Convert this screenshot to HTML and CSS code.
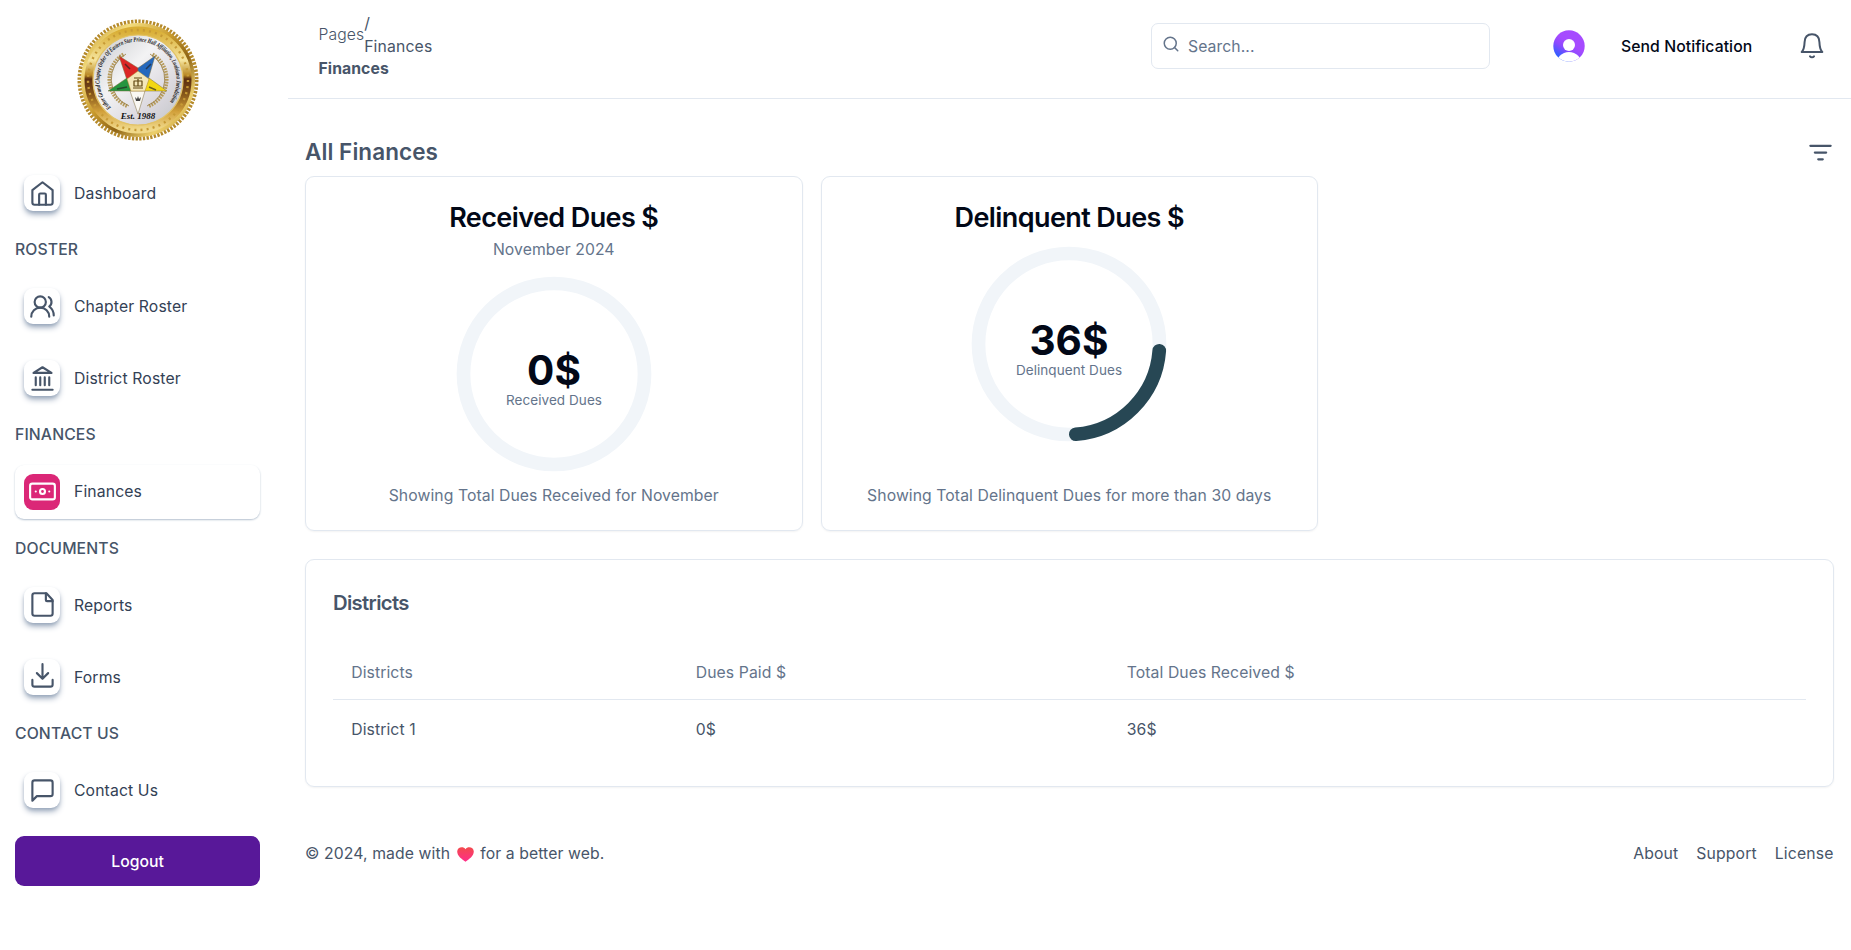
FILE: index.html
```html
<!DOCTYPE html>
<html lang="en">
<head>
<meta charset="utf-8">
<title>Finances</title>
<link rel="stylesheet" href="styles.css">
</head>
<body>
<div class="app">
  <aside class="sidebar">
    <svg class="logo" viewBox="0 0 122 122">
      <defs>
        <linearGradient id="gold" x1="0" y1="0" x2="1" y2="1">
          <stop offset="0" stop-color="#b98716"/><stop offset=".22" stop-color="#f3dc7e"/><stop offset=".45" stop-color="#c89a2c"/><stop offset=".62" stop-color="#8f6414"/><stop offset=".8" stop-color="#edd06c"/><stop offset="1" stop-color="#a87512"/>
        </linearGradient>
        <linearGradient id="band" x1="0" y1="0" x2="0" y2="1">
          <stop offset="0" stop-color="#d9ae35"/><stop offset=".3" stop-color="#f5e49d"/><stop offset=".45" stop-color="#b98825"/><stop offset=".49" stop-color="#5b2d10"/><stop offset=".65" stop-color="#87581a"/><stop offset=".82" stop-color="#d2a03a"/><stop offset="1" stop-color="#f0d98a"/>
        </linearGradient>
        <linearGradient id="pearl" x1="0" y1="0" x2="1" y2="1">
          <stop offset="0" stop-color="#c6c8cc"/><stop offset=".4" stop-color="#f3f3f4"/><stop offset=".7" stop-color="#dcd9df"/><stop offset="1" stop-color="#bfc2c6"/>
        </linearGradient>
        <path id="motto" d="M34 88.500A38.500 38.500 0 1 1 88 88.500"/>
      </defs>
      <circle cx="61" cy="61" r="58.500" fill="none" stroke="#b58a2b" stroke-width="4" stroke-dasharray="2.300 1.375"/>
      <circle cx="61" cy="61" r="57" fill="url(#gold)"/>
      <circle cx="61" cy="61" r="49" fill="none" stroke="url(#band)" stroke-width="9"/>
      <circle cx="61" cy="61" r="50" fill="none" stroke="#c79a35" stroke-width="2.400" stroke-dasharray="2 4.158"/>
      <circle cx="61" cy="61" r="45" fill="url(#pearl)" stroke="#e2c265" stroke-width="1.200"/>
      <g fill="none" stroke="#b59a5a" stroke-width="3.600" stroke-dasharray="1.700 1">
        <path d="M50 87A29 29 0 0 1 47 35"/><path d="M72 87A29 29 0 0 0 75 35"/>
      </g>
      <path d="M52 87A29 29 0 0 1 49 35M70 87A29 29 0 0 0 73 35" fill="none" stroke="#94783c" stroke-width=".8"/>
      <g stroke="#7c6a3a" stroke-width=".5">
        <path d="M42 37L61 49 61 53 50 61Z" fill="#dc2626"/>
        <path d="M78 37L61 49 61 53 71 61Z" fill="#2468bd"/>
        <path d="M31 72L50 59 54 72Z" fill="#26953f"/>
        <path d="M90 72L72 59 67 72Z" fill="#f2d713"/>
        <path d="M61 95L53 72 68 72Z" fill="#faf8f3"/>
        <path d="M61 52L72 60 68 72 54 72 50 60Z" fill="#f4e7b9" stroke="#b28a2f"/>
      </g>
      <path d="M57 59h8M57 62h8v5h-8zM56 69h10M61 60v7" fill="none" stroke="#5f4712" stroke-width="1.200"/>
      <path d="M58 78l1 4h4l1-4-2 2-1-3-1 3z" fill="#444"/>
      <path d="M48 45l5 5M69 50l5-5M40 70l10-2M72 68l7 3" stroke="#222" stroke-width="1.500" opacity=".65"/>
      <text class="logo-text"><textPath href="#motto" textLength="174" lengthAdjust="spacingAndGlyphs">Esther Grand Chapter Order Of Eastern Star Prince Hall Affiliation, Louisiana Jurisdiction</textPath></text>
      <text class="logo-year" x="61" y="100" text-anchor="middle">Est. 1988</text>
    </svg>

    <nav class="nav">
      <a class="item"><span class="tile"><svg viewBox="0 0 24 24"><path d="M3 9l9-7 9 7v11a2 2 0 0 1-2 2H5a2 2 0 0 1-2-2z"/><path d="M9 22V13a1 1 0 0 1 1-1h4a1 1 0 0 1 1 1v9"/></svg></span>Dashboard</a>
      <h6>ROSTER</h6>
      <a class="item"><span class="tile"><svg viewBox="0 0 24 24"><path d="M18 21a8 8 0 0 0-16 0"/><circle cx="10" cy="8" r="5"/><path d="M22 20c0-3.370-2-6.500-4-8a5 5 0 0 0-.45-8.300"/></svg></span>Chapter Roster</a>
      <a class="item gap"><span class="tile"><svg viewBox="0 0 24 24"><path d="M3 22h18M6 18v-7M10 18v-7M14 18v-7M18 18v-7M12 2l8 5H4z"/></svg></span>District Roster</a>
      <h6>FINANCES</h6>
      <a class="item active"><span class="tile"><svg viewBox="0 0 24 24"><rect x="1" y="5" width="22" height="14" rx="2"/><circle cx="12" cy="12" r="2.200"/><path d="M6 12h.01M18 12h.01"/></svg></span>Finances</a>
      <h6>DOCUMENTS</h6>
      <a class="item"><span class="tile"><svg viewBox="0 0 24 24"><path d="M15.500 2H5a2 2 0 0 0-2 2v16a2 2 0 0 0 2 2h14a2 2 0 0 0 2-2V8z"/><path d="M15 2v6a1 1 0 0 0 1 1h5"/></svg></span>Reports</a>
      <a class="item gap"><span class="tile"><svg viewBox="0 0 24 24"><path d="M21 15v4a2 2 0 0 1-2 2H5a2 2 0 0 1-2-2v-4M7 9l5 5 5-5M12 14V1"/></svg></span>Forms</a>
      <h6>CONTACT US</h6>
      <a class="item"><span class="tile"><svg viewBox="0 0 24 24"><path d="M21 15a2 2 0 0 1-2 2H7l-4 4V5a2 2 0 0 1 2-2h14a2 2 0 0 1 2 2z"/></svg></span>Contact Us</a>
    </nav>
    <button class="logout">Logout</button>
  </aside>

  <div class="page">
    <header class="topbar">
      <div class="crumbs">
        <div class="trail"><span class="root">Pages</span><span class="leaf"><span class="slash">/</span><span>Finances</span></span></div>
        <div class="here">Finances</div>
      </div>
      <div class="search"><svg viewBox="0 0 24 24"><circle cx="11" cy="11" r="8"/><path d="m21 21-4.300-4.300"/></svg><span>Search...</span></div>
      <svg class="avatar" viewBox="0 0 32 32">
        <defs><linearGradient id="av" x1=".6" y1=".45" x2=".3" y2=".9"><stop offset="0" stop-color="#a64bff"/><stop offset=".4" stop-color="#8f49ff"/><stop offset="1" stop-color="#345dff"/></linearGradient><clipPath id="round"><circle cx="16" cy="16" r="15.700"/></clipPath></defs>
        <g clip-path="url(#round)"><rect width="32" height="32" fill="url(#av)"/><circle cx="16" cy="15" r="6" fill="#fff"/><circle cx="16" cy="35" r="13" fill="#fff"/></g>
      </svg>
      <span class="send">Send Notification</span>
      <svg class="bell" viewBox="0 0 24 26"><path d="M1.700 19H22.300c-2-2-2.700-5-2.900-10C19.200 4.300 16.500 1.300 12 1.300S4.800 4.300 4.600 9c-.2 5-.9 8-2.900 10z"/><path d="M10 23.300c1 1.300 3 1.300 4 0"/></svg>
    </header>

    <main class="content">
      <div class="heading"><h1>All Finances</h1><svg viewBox="0 0 24 24"><path d="M3 6h18M7 12h10M10 18h4"/></svg></div>
      <div class="cards">
        <section class="card dues">
          <h2>Received Dues $</h2>
          <p>November 2024</p>
          <svg class="ring" viewBox="0 0 196 196"><circle cx="98" cy="98" r="90.500"/><text class="amount" x="98" y="109">0$</text><text class="label" x="98" y="129.300">Received Dues</text></svg>
          <p class="note">Showing Total Dues Received for November</p>
        </section>
        <section class="card dues">
          <h2>Delinquent Dues $</h2>
          <svg class="ring" viewBox="0 0 196 196"><circle cx="98" cy="98" r="90.500"/><path d="M188.250 104.800A90.500 90.500 0 0 1 104.800 188.250"/><text class="amount" x="98" y="109">36$</text><text class="label" x="98" y="129.300">Delinquent Dues</text></svg>
          <p class="note">Showing Total Delinquent Dues for more than 30 days</p>
        </section>
      </div>
      <section class="card districts">
        <h3>Districts</h3>
        <div class="row head"><span>Districts</span><span>Dues Paid $</span><span>Total Dues Received $</span></div>
        <div class="row"><span>District 1</span><span>0$</span><span>36$</span></div>
      </section>
      <footer class="footer">
        <div class="made">© 2024, made with <svg viewBox="0 0 17 15"><defs><linearGradient id="ht" x1="0" y1="0" x2="0" y2="1"><stop offset="0" stop-color="#f34a4d"/><stop offset="1" stop-color="#ff2d8a"/></linearGradient></defs><path d="M8.500 14.800C5 12.500.2 9 .2 4.600.2 0 6.300-1.100 8.500 2.200 10.700-1.100 16.800 0 16.800 4.600c0 4.400-4.800 7.900-8.300 10.200z" fill="url(#ht)"/></svg> for a better web.</div>
        <div class="links"><a>About</a><a>Support</a><a>License</a></div>
      </footer>
    </main>
  </div>
</div>
</body>
</html>
```
FILE: styles.css
```css
* { box-sizing: border-box; margin: 0; padding: 0; }
body { background: #fff; font-family: Inter, sans-serif; font-size: 15.75px; line-height: 22.5px; letter-spacing: .07px; color: #475569; }
svg { display: block; flex: none; fill: none; stroke-linecap: round; stroke-linejoin: round; }
.app { display: flex; height: 950px; overflow: hidden; }

.sidebar { width: 288px; flex: none; padding: 19px 28px 0 15px; }
.logo { width: 122px; height: 122px; margin: 0 auto; stroke-linecap: butt; letter-spacing: 0; }
.logo-text { font: italic bold 6.5px "Liberation Serif", serif; fill: #111; }
.logo-year { font: italic bold 9px "Liberation Serif", serif; fill: #111; }
.nav { display: flex; flex-direction: column; padding-top: 25px; }
.item { display: flex; align-items: center; gap: 14px; height: 54px; padding: 2px 9px 0; border-radius: 9px; color: #334155; letter-spacing: .12px; }
.item.gap { margin-top: 18px; }
.nav h6 { font-size: 15.75px; font-weight: 500; line-height: 22.5px; color: #475569; margin: 19px 0 17.8px; letter-spacing: .12px; }
.tile { display: flex; align-items: center; justify-content: center; width: 36px; height: 36px; margin-top: -2px; border-radius: 9px; background: #fff; color: #475569; box-shadow: 0 4px 6px -1px #94a3b8, 0 2px 4px -2px #94a3b8; }
.tile svg { width: 27px; height: 27px; stroke: currentColor; stroke-width: 1.9; }
.item.active { box-shadow: 0 1px 2px #b4c0cf; }
.active .tile { background: #db2777; color: #fff; box-shadow: none; }
.logout { display: block; width: 245px; height: 50px; margin-top: 19px; padding-top: 2px; border: 0; border-radius: 9px; background: #581899; color: #fff; font: 500 15.75px/22.5px Inter, sans-serif; }

.page { flex: 1; min-width: 0; }
.topbar { display: flex; align-items: center; height: 99px; padding: 0 27px 6px 30.5px; border-bottom: 1px solid #e2e8f0; }
.crumbs { width: 832.5px; flex: none; }
.trail { display: flex; align-items: center; }
.root { font-weight: 300; }
.leaf { display: flex; flex-direction: column; letter-spacing: .15px; }
.here { font-weight: 700; line-height: 21px; }
.search { display: flex; width: 339px; height: 46px; border: 1px solid #e2e8f0; border-radius: 7px; padding: 12px 10px 0 10px; color: #64748b; }
.search svg { width: 18px; height: 18px; margin: -1px 8px 0 0; stroke: #64748b; stroke-width: 2; }
.avatar { width: 32px; height: 32px; margin-left: 63px; }
.send { margin-left: 36px; padding-top: 2px; font-weight: 500; color: #020817; white-space: nowrap; }
.bell { width: 24px; height: 26px; margin-left: auto; stroke: #475569; stroke-width: 2; }

.content { padding: 39px 17.5px 0 17px; }
.heading { display: flex; align-items: center; justify-content: space-between; height: 38px; padding-bottom: 10px; }
h1 { font-size: 22.5px; line-height: 28px; font-weight: 600; }
.heading svg { width: 27px; height: 27px; stroke: #475569; stroke-width: 2; }
.cards { display: grid; grid-template-columns: repeat(3, 1fr); gap: 18px; }
.card { border: 1px solid #e2e8f0; border-radius: 9px; box-shadow: 0 1px 2px rgba(0, 0, 0, .05); }
.dues { display: flex; flex-direction: column; align-items: center; height: 355px; padding: 27px 27px 23px; color: #64748b; }
.dues h2 { font-size: 27px; font-weight: 600; line-height: 27px; letter-spacing: -.6px; color: #020817; margin-bottom: 8px; }
.ring { width: 196px; height: 196px; margin-top: 7px; }
.dues p + .ring { margin-top: 14.2px; }
.ring circle { stroke: #f1f5f9; stroke-width: 13.7; }
.ring path { stroke: #274754; stroke-width: 13.7; }
.ring text { text-anchor: middle; }
.amount { font-size: 40.5px; font-weight: 700; fill: #020817; }
.label { font-size: 13.5px; fill: #64748b; }
.note { margin-top: auto; }
.districts { height: 228px; margin-top: 28px; padding: 27px; }
h3 { font-size: 20.25px; font-weight: 600; line-height: 32px; letter-spacing: -.65px; margin-bottom: 27px; }
.row { display: grid; grid-template-columns: 344.5px 431px 1fr; align-items: center; height: 58px; padding: 2px 0 0 18.3px; }
.row.head { height: 54px; border-bottom: 1px solid #e2e8f0; color: #64748b; }
.footer { display: flex; justify-content: space-between; margin-top: 56px; }
.made { display: flex; white-space: pre; letter-spacing: .1px; }
.made svg { width: 17px; height: 15px; margin: 4px 2px 0 2px; }
.links { display: flex; gap: 18px; letter-spacing: .14px; }
```
